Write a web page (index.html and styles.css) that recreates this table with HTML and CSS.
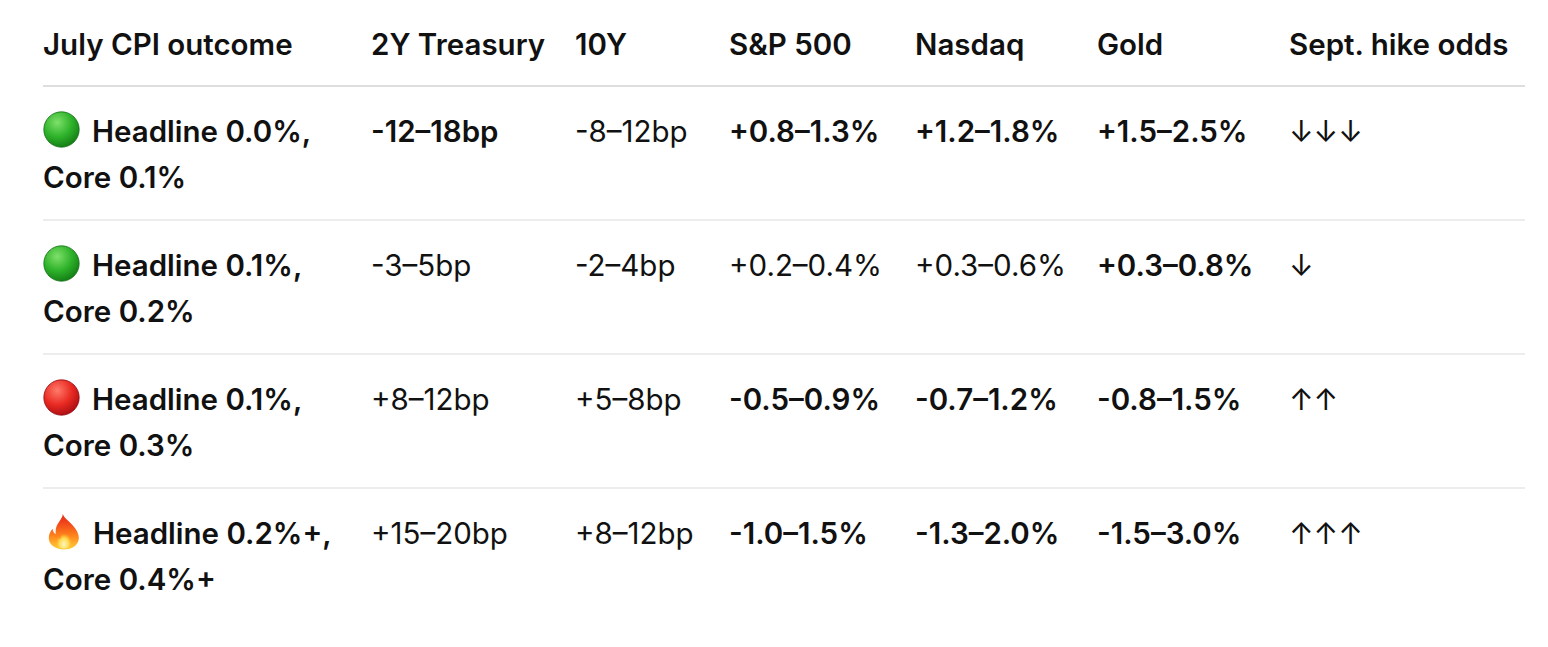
FILE: index.html
```html
<!DOCTYPE html>
<html lang="en">
<head>
<meta charset="utf-8">
<title>July CPI outcomes</title>
<link rel="stylesheet" href="styles.css">
</head>
<body>
<svg class="defs" width="0" height="0" aria-hidden="true">
  <defs>
    <radialGradient id="gGreen" cx="0.38" cy="0.3" r="0.75">
      <stop offset="0" stop-color="#7ee06a"/>
      <stop offset="0.55" stop-color="#2eb22a"/>
      <stop offset="1" stop-color="#127a14"/>
    </radialGradient>
    <radialGradient id="gRed" cx="0.38" cy="0.3" r="0.75">
      <stop offset="0" stop-color="#ff7a6a"/>
      <stop offset="0.55" stop-color="#e82a22"/>
      <stop offset="1" stop-color="#a80c12"/>
    </radialGradient>
    <linearGradient id="gFire" x1="0" y1="1" x2="0" y2="0">
      <stop offset="0" stop-color="#ffd23a"/>
      <stop offset="0.35" stop-color="#ff8a1c"/>
      <stop offset="0.75" stop-color="#f0441a"/>
      <stop offset="1" stop-color="#e02a18"/>
    </linearGradient>
    <radialGradient id="gFireCore" cx="0.5" cy="0.8" r="0.5">
      <stop offset="0" stop-color="#fff6c0"/>
      <stop offset="0.6" stop-color="#ffd84a"/>
      <stop offset="1" stop-color="#ffb030" stop-opacity="0"/>
    </radialGradient>
  </defs>
</svg>
<table class="cpi">
  <colgroup>
    <col class="c1"><col class="c2"><col class="c3"><col class="c4"><col class="c5"><col class="c6"><col class="c7">
  </colgroup>
  <thead>
    <tr>
      <th>July CPI outcome</th>
      <th>2Y Treasury</th>
      <th>10Y</th>
      <th>S&amp;P 500</th>
      <th>Nasdaq</th>
      <th>Gold</th>
      <th>Sept. hike odds</th>
    </tr>
  </thead>
  <tbody>
    <tr>
      <td class="b"><svg class="emo" viewBox="0 0 36 36"><circle cx="18" cy="18" r="17.2" fill="url(#gGreen)" stroke="#137015" stroke-width="0.8"/></svg>Headline 0.0%, Core 0.1%</td>
      <td class="b">-12–18bp</td>
      <td>-8–12bp</td>
      <td class="b">+0.8–1.3%</td>
      <td class="b">+1.2–1.8%</td>
      <td class="b">+1.5–2.5%</td>
      <td class="arr">↓↓↓</td>
    </tr>
    <tr>
      <td class="b"><svg class="emo" viewBox="0 0 36 36"><circle cx="18" cy="18" r="17.2" fill="url(#gGreen)" stroke="#137015" stroke-width="0.8"/></svg>Headline 0.1%, Core 0.2%</td>
      <td>-3–5bp</td>
      <td>-2–4bp</td>
      <td>+0.2–0.4%</td>
      <td>+0.3–0.6%</td>
      <td class="b">+0.3–0.8%</td>
      <td class="arr">↓</td>
    </tr>
    <tr>
      <td class="b"><svg class="emo" viewBox="0 0 36 36"><circle cx="18" cy="18" r="17.2" fill="url(#gRed)" stroke="#950a10" stroke-width="0.8"/></svg>Headline 0.1%, Core 0.3%</td>
      <td>+8–12bp</td>
      <td>+5–8bp</td>
      <td class="b">-0.5–0.9%</td>
      <td class="b">-0.7–1.2%</td>
      <td class="b">-0.8–1.5%</td>
      <td class="arr">↑↑</td>
    </tr>
    <tr>
      <td class="b"><svg class="emo fire" viewBox="5 1 25.5 34.5" preserveAspectRatio="none"><path d="M17 1.5c1.2 4.5 6 7.5 9.5 12.5 3 4.2 4.5 8.5 3.6 12.6C28.8 32 24 35 18 35S6.6 31.6 5.8 26c-.6-4 .8-7.6 3-10.4.2 2.4 1 4 2.6 5-.6-4.4.6-8.2 2.8-11.4C15.8 6 17.6 4 17 1.5z" fill="url(#gFire)"/><path d="M18.5 14c.8 3 4 5 5.6 8.4 1.6 3.4 1 7.6-1.6 10-1.4 1.3-3 1.8-4.6 1.8-3.4 0-6.2-2.4-6.6-5.8-.3-2.6.8-4.6 2.2-6.2.2 1.6.8 2.6 1.8 3.2-.2-3.6.6-6.2 2.2-8.4.6-.9 1-1.9 1-3z" fill="url(#gFireCore)"/></svg>Headline 0.2%+, Core 0.4%+</td>
      <td>+15–20bp</td>
      <td>+8–12bp</td>
      <td class="b">-1.0–1.5%</td>
      <td class="b">-1.3–2.0%</td>
      <td class="b">-1.5–3.0%</td>
      <td class="arr">↑↑↑</td>
    </tr>
  </tbody>
</table>
</body>
</html>
```

FILE: styles.css
```css
html, body {
  margin: 0;
  padding: 0;
  background: #ffffff;
}

body {
  font-family: Inter, "Noto Sans", "DejaVu Sans", sans-serif;
  color: #111111;
  font-size: 29.5px;
  line-height: 46px;
}

.defs {
  position: absolute;
  width: 0;
  height: 0;
  overflow: hidden;
}

.cpi {
  margin-left: 43px;
  border-collapse: collapse;
  table-layout: fixed;
  width: 1482px;
}

.c1 { width: 328px; }
.c2 { width: 204px; }
.c3 { width: 154px; }
.c4 { width: 186px; }
.c5 { width: 182px; }
.c6 { width: 192px; }
.c7 { width: 236px; }

.cpi th {
  text-align: left;
  font-weight: 600;
  padding: 21px 12px 18px 0;
  border-bottom: 2px solid #dedede;
  white-space: nowrap;
  vertical-align: top;
}

.cpi td {
  text-align: left;
  font-weight: 400;
  padding: 21px 12px 19px 0;
  border-bottom: 2px solid #ededed;
  vertical-align: top;
  white-space: nowrap;
}

.cpi td:first-child {
  white-space: normal;
  padding-right: 16px;
}

.cpi tbody tr:last-child td {
  border-bottom: none;
}

.cpi td.b {
  font-weight: 600;
}

.emo {
  display: inline-block;
  width: 37px;
  height: 37px;
  vertical-align: -6px;
  margin-right: 12px;
}

.emo.fire {
  width: 31px;
  height: 37px;
  margin-left: 5px;
  margin-right: 14px;
  vertical-align: -6px;
}

.arr {
  font-family: Inter, "DejaVu Sans", sans-serif;
  font-weight: 400;
}
```
